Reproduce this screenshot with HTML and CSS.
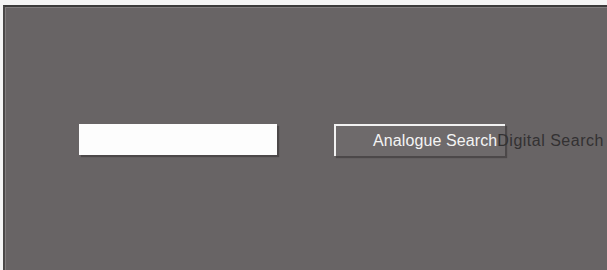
FILE: index.html
```html
<!DOCTYPE html>
<html>
<head>
<meta charset="utf-8">
<link rel="stylesheet" href="styles.css">
</head>
<body>
<div class="frame">
  <div class="row">
    <div class="field"></div>
    <div class="button">
      <span class="analogue">Analogue Search</span><span class="digital">Digital Search</span>
    </div>
  </div>
</div>
</body>
</html>
```
FILE: styles.css
```css
html, body {
  margin: 0;
  padding: 0;
  background: #f4f4f4;
  width: 607px;
  height: 270px;
  overflow: hidden;
}
.frame {
  margin: 5px 0 0 3px;
  height: 265px;
  box-sizing: border-box;
  background: #686465;
  border-top: 2px solid #3b3a3a;
  border-left: 2px solid #4a4848;
  box-shadow: inset 1px 1px 0 #807c7d;
  font-family: "Liberation Sans", Arial, sans-serif;
}
.row {
  display: flex;
  align-items: flex-start;
  padding: 117px 0 0 74px;
}
.field {
  width: 198px;
  height: 31px;
  background: #fdfdfd;
  box-shadow: 2px 2px 1px #4c4849;
}
.button {
  margin-left: 57px;
  width: 171px;
  height: 32px;
  background: #6e6a6b;
  border-top: 2px solid #f2f2f2;
  border-left: 2px solid #f2f2f2;
  box-shadow: 2px 2px 1px #4c4849;
  display: flex;
  align-items: center;
  padding-left: 37px;
  box-sizing: border-box;
  white-space: nowrap;
  font-size: 16px;
  letter-spacing: 0.1px;
}
.analogue {
  color: #f4f4f4;
}
.digital {
  color: #333132;
  letter-spacing: 0.5px;
}
```
